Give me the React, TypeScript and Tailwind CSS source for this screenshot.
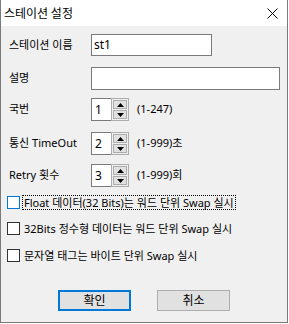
import * as React from "react";

const font = "font-['Noto_Sans','Noto_Sans_CJK_KR',sans-serif]";

function SpinBox({ value, hint }: { value: string; hint: string }) {
  return (
    <div className="flex items-center">
      <div className="flex h-[23px]">
        <div className="flex w-[20px] items-center border border-r-0 border-[#7a7a7a] bg-white pl-[3px] text-[12px]">
          {value}
        </div>
        <div className="flex w-[18px] flex-col gap-[1px] border border-[#adadad] bg-[#f0f0f0] p-[1px]">
          <div className="flex flex-1 items-center justify-center border border-[#adadad] bg-[#e1e1e1]">
            <svg width="7" height="4" viewBox="0 0 7 4">
              <path d="M3.5 0 L7 4 L0 4 Z" fill="#000" />
            </svg>
          </div>
          <div className="flex flex-1 items-center justify-center border border-[#adadad] bg-[#e1e1e1]">
            <svg width="7" height="4" viewBox="0 0 7 4">
              <path d="M0 0 L7 0 L3.5 4 Z" fill="#000" />
            </svg>
          </div>
        </div>
      </div>
      <span className="ml-[8px]">{hint}</span>
    </div>
  );
}

function Check({
  label,
  focused = false,
  className = "",
}: {
  label: string;
  focused?: boolean;
  className?: string;
}) {
  return (
    <div className={`flex h-[15px] items-center pl-[6px] ${className}`}>
      <div
        className={`h-[13px] w-[13px] bg-white ${
          focused ? "border border-[#0078d7]" : "border border-[#333333]"
        }`}
      />
      <span
        className={`ml-[2px] flex h-[15px] items-center px-[1px] leading-none ${
          focused ? "border border-dotted border-black" : "border border-transparent"
        }`}
      >
        {label}
      </span>
    </div>
  );
}

export default function App() {
  return (
    <div className={`h-[324px] w-[289px] bg-white ${font} text-black`}>
      <div className="flex h-[323px] w-[288px] flex-col border-x border-b border-[#7a7a7a] bg-[#f0f0f0]">
        <div className="flex h-[26px] items-center justify-between bg-white pl-[3px] pr-[9px] text-[12px]">
          <span className="font-['Noto_Sans_CJK_KR',sans-serif]">스테이션 설정</span>
          <svg width="11" height="11" viewBox="0 0 11 11">
            <path d="M0.5 0.5 L10.5 10.5 M10.5 0.5 L0.5 10.5" stroke="#000" strokeWidth="1" />
          </svg>
        </div>

        <div className="flex flex-col text-[11px]">
          <div className="mt-[8px] flex h-[22px] items-center pl-[8px]">
            <span className="w-[82px]">스테이션 이름</span>
            <div className="flex h-[22px] w-[121px] items-center border border-[#7a7a7a] bg-white pl-[2px] text-[12px]">
              st1
            </div>
          </div>

          <div className="mt-[11px] flex h-[23px] items-center pl-[8px]">
            <span className="w-[82px]">설명</span>
            <div className="h-[23px] w-[189px] border border-[#7a7a7a] bg-white" />
          </div>

          <div className="mt-[8px] flex h-[23px] items-center pl-[8px]">
            <span className="w-[82px]">국번</span>
            <SpinBox value="1" hint="(1-247)" />
          </div>

          <div className="mt-[11px] flex h-[23px] items-center pl-[8px]">
            <span className="w-[82px]">통신 TimeOut</span>
            <SpinBox value="2" hint="(1-999)초" />
          </div>

          <div className="mt-[9px] flex h-[23px] items-center pl-[8px]">
            <span className="w-[82px]">Retry 횟수</span>
            <SpinBox value="3" hint="(1-999)회" />
          </div>

          <Check
            className="mt-[8px]"
            focused
            label="Float 데이터(32 Bits)는 워드 단위 Swap 실시"
          />
          <Check
            className="mt-[11px]"
            label="32Bits 정수형 데이터는 워드 단위 Swap 실시"
          />
          <Check
            className="mt-[12px]"
            label="문자열 태그는 바이트 단위 Swap 실시"
          />

          <div className="mt-[27px] flex pl-[57px] text-[12px]">
            <div className="flex h-[21px] w-[73px] items-center justify-center border-2 border-[#0078d7] bg-[#e1e1e1]">
              확인
            </div>
            <div className="ml-[26px] flex h-[21px] w-[73px] items-center justify-center border border-[#adadad] bg-[#e1e1e1]">
              취소
            </div>
          </div>
        </div>
      </div>
    </div>
  );
}
